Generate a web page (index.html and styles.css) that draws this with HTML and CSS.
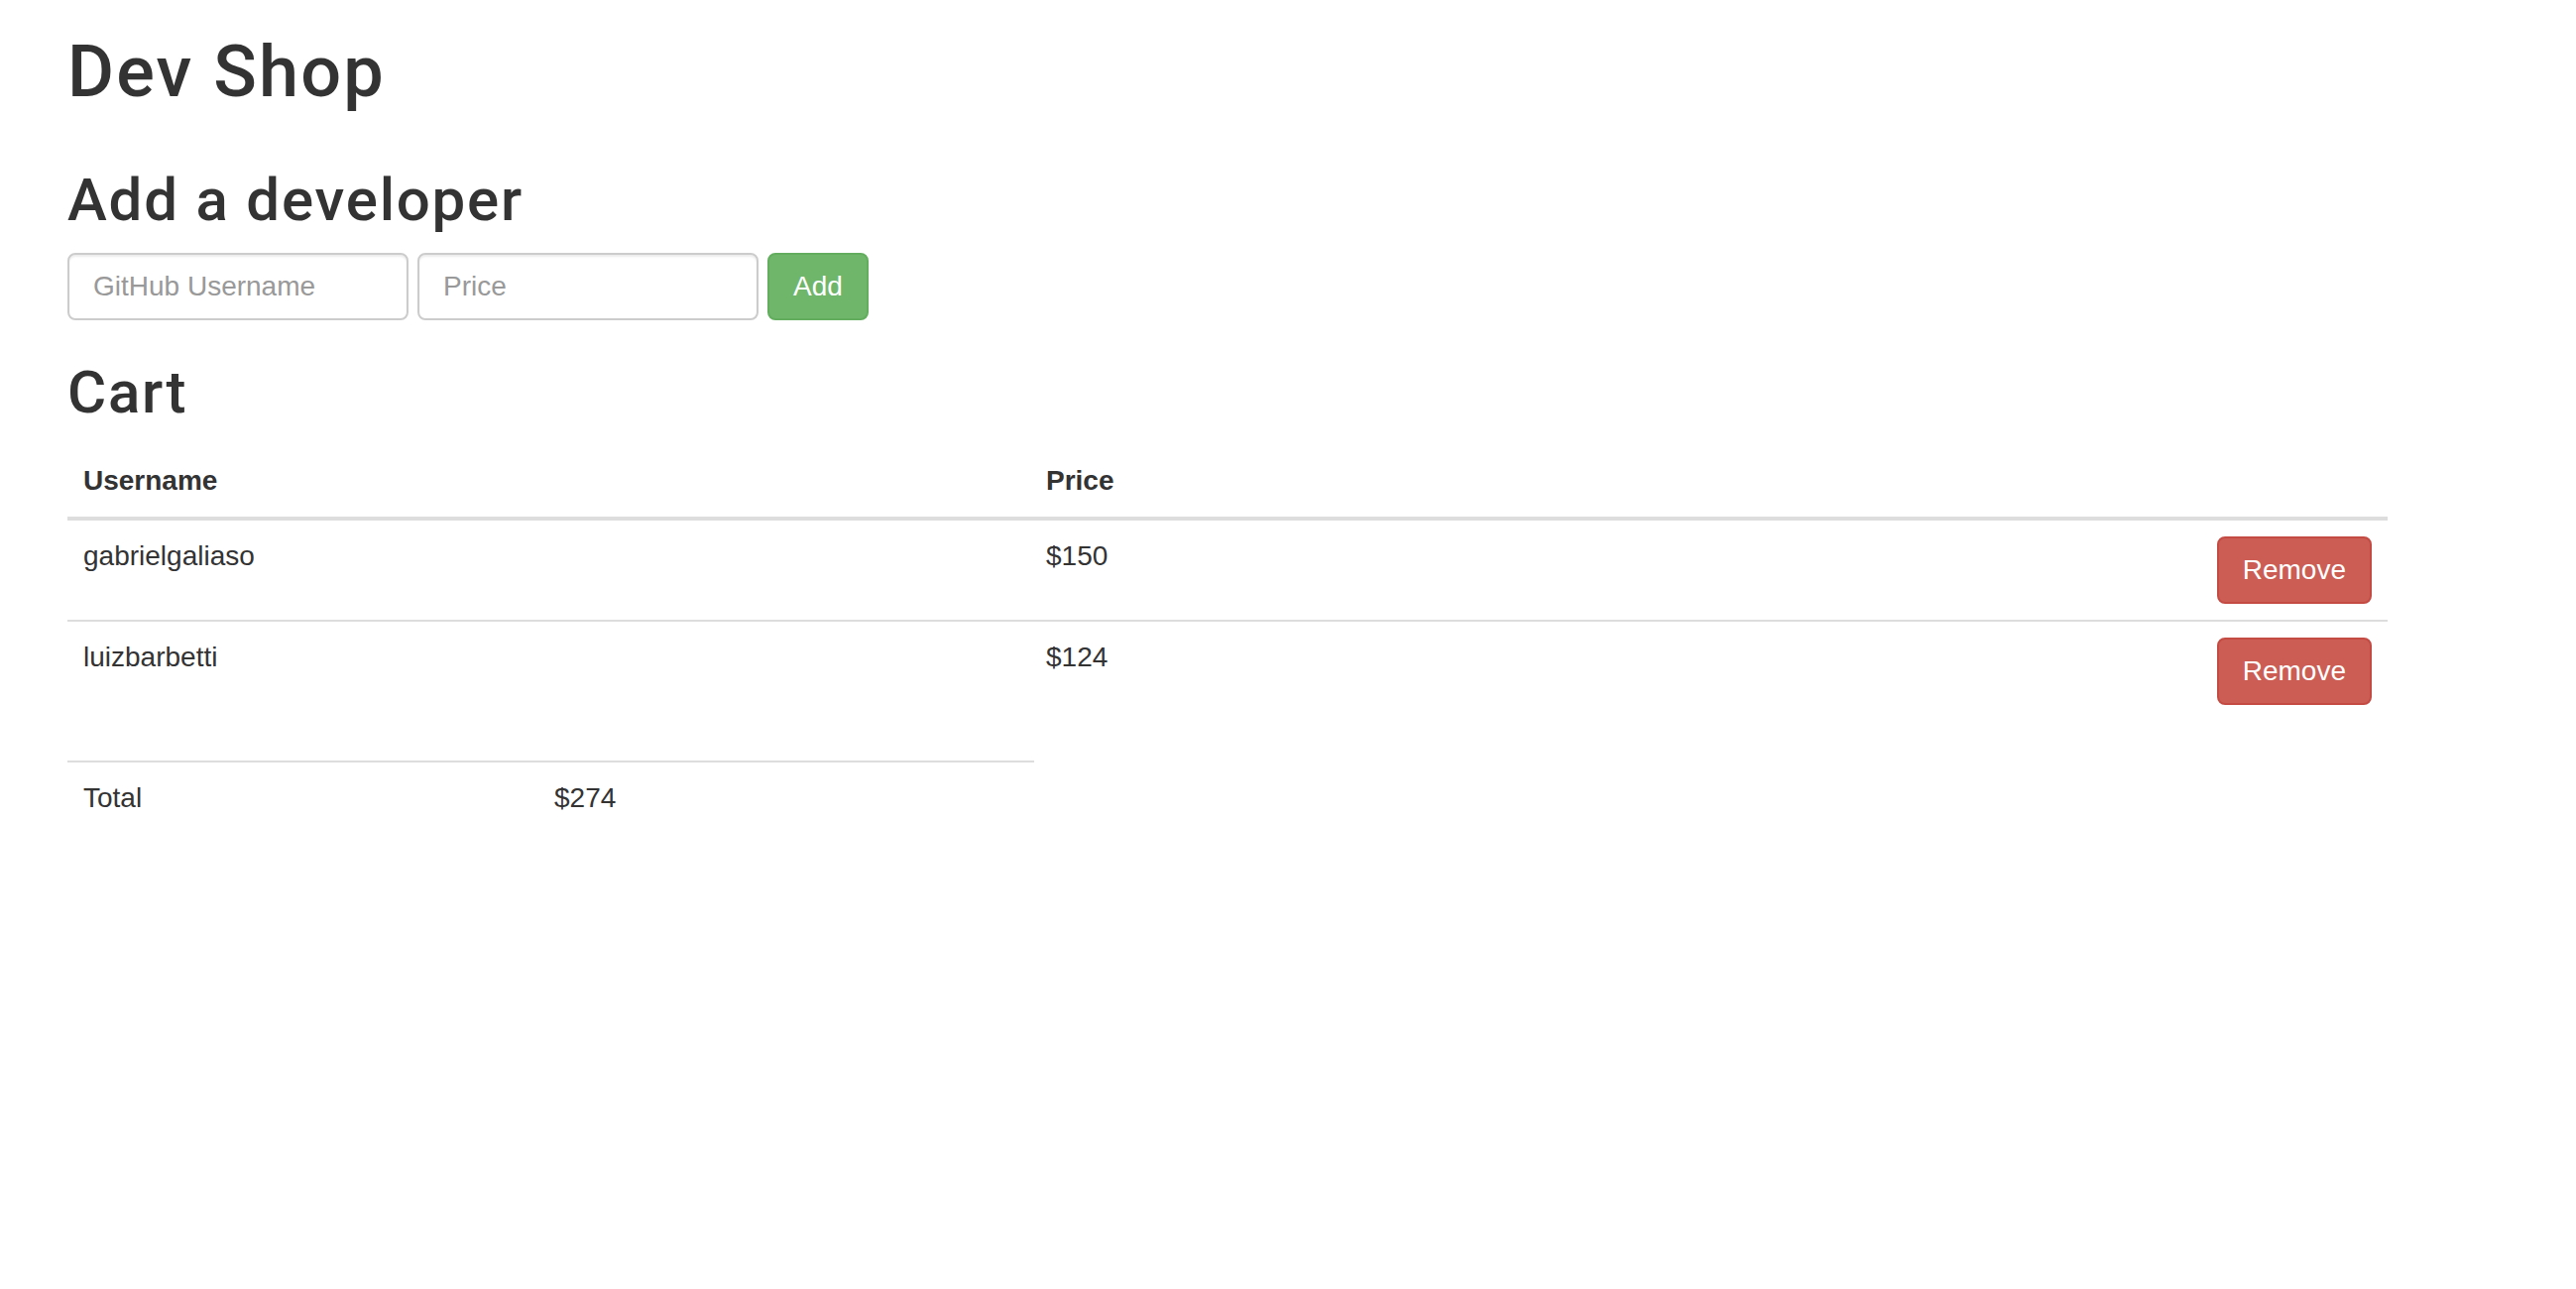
FILE: index.html
```html
<!DOCTYPE html>
<html lang="en">
<head>
    <title>Dev Shop</title>
    <meta charset="utf-8">
    <link rel="stylesheet" href="styles.css">
</head>
<body>
<div class="container">
    <h1 class="page-title">Dev Shop</h1>

    <h2 class="section-title first">Add a developer</h2>
    <form class="add-form">
        <input class="form-control" type="text" placeholder="GitHub Username">
        <input class="form-control" type="text" placeholder="Price">
        <button class="btn btn-success" type="button">Add</button>
    </form>

    <h2 class="section-title">Cart</h2>
    <table class="table cart">
        <thead>
            <tr>
                <th class="col-user">Username</th>
                <th class="col-price">Price</th>
                <th></th>
            </tr>
        </thead>
        <tbody>
            <tr>
                <td>gabrielgaliaso</td>
                <td>$150</td>
                <td class="col-action"><button class="btn btn-danger" type="button">Remove</button></td>
            </tr>
            <tr>
                <td>luizbarbetti</td>
                <td>$124</td>
                <td class="col-action"><button class="btn btn-danger" type="button">Remove</button></td>
            </tr>
        </tbody>
    </table>

    <table class="table total">
        <tbody>
            <tr>
                <td class="total-label">Total</td>
                <td>$274</td>
            </tr>
        </tbody>
    </table>
</div>
</body>
</html>
```

FILE: styles.css
```css
* {
    box-sizing: border-box;
}
body {
    margin: 0;
    font-family: "Liberation Sans", Arial, Helvetica, sans-serif;
    font-size: 28px;
    line-height: 40px;
    color: #333;
    background: #fff;
}
.container {
    width: 2408px;
    padding-left: 68px;
}
/* headings: helvetica medium look */
.page-title,
.section-title {
    font-family: Roboto, "Liberation Sans", sans-serif;
    font-weight: 500;
    line-height: 1.1;
    letter-spacing: 0.03em;
}
.page-title {
    font-size: 72px;
    margin: 33px 0 20px;
}
.section-title {
    font-size: 60px;
    margin: 40px 0 20px;
}
.section-title.first {
    margin-top: 57px;
}
.add-form {
    display: flex;
    gap: 9px;
    margin: 0;
}
.form-control {
    width: 344px;
    height: 68px;
    padding: 12px 24px;
    font-family: inherit;
    font-size: 28px;
    line-height: 40px;
    color: #555;
    background: #fff;
    border: 2px solid #ccc;
    border-radius: 8px;
    box-shadow: inset 0 2px 2px rgba(0, 0, 0, .075);
    outline: none;
}
.form-control::placeholder {
    color: #999;
}
.btn {
    display: inline-block;
    height: 68px;
    padding: 12px 24px;
    font-family: inherit;
    font-size: 28px;
    line-height: 40px;
    color: #fff;
    border: 2px solid transparent;
    border-radius: 8px;
    cursor: pointer;
}
.btn-success {
    background: #6fb66b;
    border-color: #62ae5e;
}
.btn-danger {
    background: #cc5d54;
    border-color: #c44b43;
}
.table {
    border-collapse: collapse;
    border-spacing: 0;
    margin-bottom: 40px;
}
.table th,
.table td {
    padding: 16px;
    text-align: left;
    vertical-align: top;
    border-top: 2px solid #ddd;
}
.table thead th {
    vertical-align: bottom;
    border-top: 0;
    border-bottom: 4px solid #ddd;
    font-weight: bold;
}
.cart {
    width: 2340px;
}
.col-user {
    width: 971px;
}
.col-price {
    width: 975px;
}
.cart .col-action {
    text-align: right;
}
.total {
    width: 975px;
}
.total-label {
    width: 475px;
}
```
